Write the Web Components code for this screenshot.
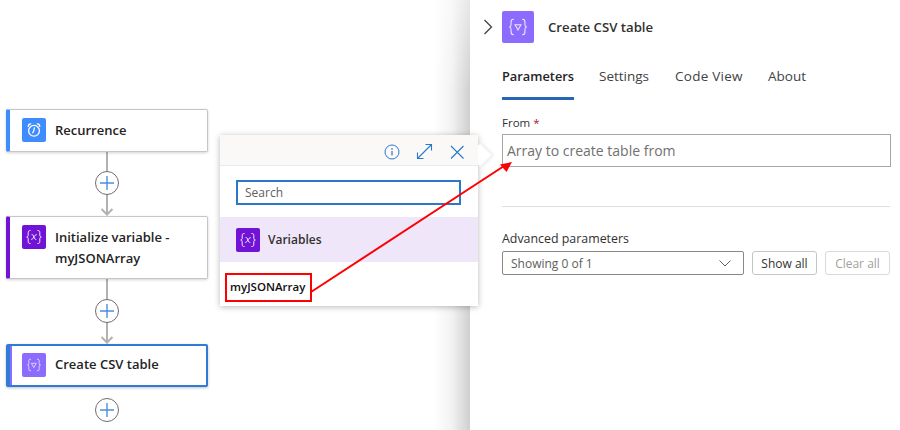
<!DOCTYPE html>
<html>
<head>
<meta charset="utf-8">
<title>Create CSV table</title>
<style>
  html, body { margin: 0; padding: 0; }
  body {
    width: 900px;
    height: 430px;
    overflow: hidden;
    position: relative;
    background: #fff;
    font-family: "Open Sans", "Noto Sans", sans-serif;
    color: #242424;
  }
</style>
</head>
<body>
<script>
const ICONS = {
  clock: `<svg viewBox="0 0 24 24" width="24" height="24" fill="none" stroke="#fff" stroke-width="1.3" stroke-linecap="round">
    <circle cx="12" cy="12.8" r="5.4"/><path d="M12.400 9.800 11.700 13l-1 1.800"/>
    <path d="M6.300 8.400c0-1.500 1-2.600 2.500-2.600M17.700 8.400c0-1.500-1-2.600-2.500-2.600"/></svg>`,
  variable: `<svg viewBox="0 0 24 24" width="24" height="24" fill="none" stroke="#fff" stroke-opacity=".9" stroke-width="1" stroke-linecap="round">
    <path d="M8.200 5.500c-1.800 0-2 .8-2 2.200v2.400c0 1.200-.5 1.700-1.500 1.900 1 .2 1.500.7 1.500 1.900v2.400c0 1.400.2 2.200 2 2.200"/>
    <path d="M15.800 5.500c1.800 0 2 .8 2 2.200v2.400c0 1.200.5 1.700 1.500 1.900-1 .2-1.500.7-1.500 1.900v2.400c0 1.400-.2 2.200-2 2.200"/>
    <path d="M10 9.600c1 0 1.400.5 1.900 2.400.5 1.900.9 2.400 2 2.400M14.300 9.700c-1 .1-1.700 1.100-2.400 2.300-.7 1.200-1.300 2.300-2.300 2.400"/>
  </svg>`,
  filter: `<svg viewBox="0 0 24 24" width="24" height="24" fill="none" stroke="#fff" stroke-opacity=".85" stroke-width=".8" stroke-linecap="round">
    <path d="M8.600 6.200c-1.600 0-1.800.7-1.800 2v2.200c0 1-.4 1.400-1.300 1.600.9.200 1.300.6 1.300 1.600v2.200c0 1.300.2 2 1.800 2"/>
    <path d="M15.400 6.200c1.600 0 1.800.7 1.800 2v2.200c0 1 .4 1.400 1.300 1.600-.9.200-1.300.6-1.300 1.600v2.200c0 1.300-.2 2-1.800 2"/>
    <path d="M9.800 10.300h4.400L12 14.200z"/></svg>`
};

class ActionIcon extends HTMLElement {
  constructor() {
    super();
    this.attachShadow({mode: 'open'});
  }
  connectedCallback() {
    const size = this.getAttribute('size') || 24;
    this.shadowRoot.innerHTML = `
      <style>
        :host {
          display: block;
          flex: none;
          width: ${size}px;
          height: ${size}px;
          border-radius: 2px;
          background: ${this.getAttribute('color')};
        }
        svg { display: block; width: 100%; height: 100%; }
      </style>
      ${ICONS[this.getAttribute('name')]}
    `;
  }
}
customElements.define('action-icon', ActionIcon);

// nodes sit on a free canvas, so their place comes from the attributes
class FlowNode extends HTMLElement {
  constructor() {
    super();
    this.attachShadow({mode: 'open'});
  }
  connectedCallback() {
    this.shadowRoot.innerHTML = `
      <style>
        :host {
          position: absolute;
          box-sizing: border-box;
          left: 6px;
          width: 202px;
          top: ${this.getAttribute('top')}px;
          height: ${this.getAttribute('height')}px;
          display: flex;
          align-items: flex-start;
          gap: 9px;
          padding: 8px 12px 0 12px;
          background: #fff;
          border: 1px solid #c8c6c4;
          border-left: 4px solid ${this.getAttribute('accent')};
          border-radius: 2px;
          box-shadow: 0 1px 3px rgba(0,0,0,.18);
          font-size: 13px;
          font-weight: 600;
          line-height: 21px;
          color: #242424;
          z-index: 2;
        }
        :host([selected]) {
          border: 2px solid #2f7bd6;
          border-left: 4px solid #2f7bd6;
          padding: 7px 12px 0 12px;
          box-shadow: 0 1px 3px rgba(0,0,0,.25), inset 2px 0 0 ${this.getAttribute('accent')};
        }
        .name { padding-top: ${this.getAttribute('text-top') || 2}px; }
      </style>
      <action-icon name="${this.getAttribute('icon')}" color="${this.getAttribute('accent')}"></action-icon>
      <div class="name"><slot></slot></div>
    `;
  }
}
customElements.define('flow-node', FlowNode);

class FlowPlus extends HTMLElement {
  constructor() {
    super();
    this.attachShadow({mode: 'open'});
  }
  connectedCallback() {
    const y = +this.getAttribute('y');
    const to = this.getAttribute('to');
    const from = this.getAttribute('from');
    const w = 30;
    const h = to ? to - from : 26;
    this.shadowRoot.innerHTML = `
      <style>
        :host {
          position: absolute;
          left: 92px;
          top: ${from}px;
          width: ${w}px;
          height: ${h}px;
          z-index: 1;
        }
        svg { display: block; }
      </style>
      <svg width="${w}" height="${h}" fill="none">
        ${to ? `<path d="M15 0V${h - 1}" stroke="#b3b1b0" stroke-width="2"/>
        <path d="M9.500 ${h - 7}l5.500 5.500 5.500-5.500" stroke="#b3b1b0" stroke-width="2"/>` : ''}
        <circle cx="15" cy="${y - from}" r="11.500" fill="#fff" stroke="#706e6c"/>
        <path d="M15 ${y - from - 7}v14M8 ${y - from}h14" stroke="#4a8fdc" stroke-width="1.400"/>
      </svg>
    `;
  }
}
customElements.define('flow-plus', FlowPlus);

class TokenPicker extends HTMLElement {
  constructor() {
    super();
    this.attachShadow({mode: 'open'});
    this.shadowRoot.innerHTML = `
      <style>
        :host {
          position: absolute;
          left: 220px;
          top: 135px;
          width: 258px;
          height: 171px;
          display: flex;
          flex-direction: column;
          background: #fff;
          box-shadow: 0 1px 6px rgba(0,0,0,.28);
          z-index: 4;
          font-size: 12px;
        }
        .beak {
          position: absolute;
          right: -10px;
          top: 12px;
          width: 16px;
          height: 16px;
          background: #fff;
          transform: rotate(45deg);
          box-shadow: 2px -2px 4px rgba(0,0,0,.08);
          z-index: -1;
        }
        header {
          height: 31px;
          box-sizing: border-box;
          background: #faf9f8;
          border-bottom: 1px solid #edebe9;
          display: flex;
          justify-content: flex-end;
          align-items: center;
          gap: 16px;
          padding: 3px 13px 0 0;
        }
        header svg { display: block; }
        .search { padding: 14px 17px 12px 16px; }
        .box {
          box-sizing: border-box;
          height: 25px;
          border: 2px solid #2b78c8;
          padding-left: 7px;
          line-height: 21px;
          color: #605e5c;
        }
        .group {
          height: 45px;
          background: #efe6f9;
          display: flex;
          align-items: center;
          gap: 8px;
          padding-left: 16px;
          font-weight: 600;
          color: #323130;
        }
        .item {
          padding: 13px 0 0 10px;
          font-size: 11.500px;
          font-weight: 600;
          color: #111;
          line-height: 24px;
        }
      </style>
      <div class="beak"></div>
      <header>
        <svg width="16" height="16" viewBox="0 0 16 16" fill="none" stroke="#2a78c9" stroke-width="1">
          <circle cx="8" cy="8" r="7"/><path d="M8 7v4.400" stroke-width="1.200"/><circle cx="8" cy="4.900" r=".8" fill="#2a78c9" stroke="none"/>
        </svg>
        <svg width="17" height="17" viewBox="0 0 17 17" fill="none" stroke="#2a78c9" stroke-width="1.100">
          <path d="M1.500 15.500 15.500 1.500M9.500 1.500h6v6M1.500 9.500v6h6"/>
        </svg>
        <svg width="16" height="16" viewBox="0 0 16 16" fill="none" stroke="#2a78c9" stroke-width="1.100">
          <path d="M2 2l12.500 12.500M14.500 2 2 14.500"/>
        </svg>
      </header>
      <div class="search"><div class="box">Search</div></div>
      <div class="group"><action-icon name="variable" color="#7113d6"></action-icon><slot name="group"></slot></div>
      <div class="item"><slot></slot></div>
    `;
  }
}
customElements.define('token-picker', TokenPicker);

class PanelTabs extends HTMLElement {
  constructor() {
    super();
    this.attachShadow({mode: 'open'});
    this.shadowRoot.innerHTML = `
      <style>
        :host { display: flex; gap: 25px; font-size: 13.500px; color: #424242; }
        ::slotted(span) { display: block; height: 35px; line-height: 23px; box-sizing: border-box; white-space: nowrap; }
        ::slotted(span.on) { width: 72px; font-size: 12.800px; font-weight: 600; color: #242424; border-bottom: 3px solid #2766b5; }
        ::slotted(span.wide) { width: 67px; margin: 0 1px; letter-spacing: .25px; }
      </style>
      <slot></slot>
    `;
  }
}
customElements.define('panel-tabs', PanelTabs);

class DetailPanel extends HTMLElement {
  constructor() {
    super();
    this.attachShadow({mode: 'open'});
    this.shadowRoot.innerHTML = `
      <style>
        :host {
          position: absolute;
          left: 470px;
          top: 0;
          width: 430px;
          height: 430px;
          box-sizing: border-box;
          background: #fff;
          padding: 10px 9px 0 32px;
          display: flex;
          flex-direction: column;
          z-index: 3;
          color: #323130;
        }
        /* panel shadow, fades out toward the top of the window */
        :host::before {
          content: "";
          position: absolute;
          right: 100%;
          top: 0;
          bottom: 0;
          width: 36px;
          background: linear-gradient(to right, rgba(0,0,0,0), rgba(0,0,0,.05) 50%, rgba(0,0,0,.19));
          -webkit-mask-image: linear-gradient(to bottom, rgba(0,0,0,.5), #000 90px);
          mask-image: linear-gradient(to bottom, rgba(0,0,0,.5), #000 90px);
        }
        .head {
          display: flex;
          align-items: center;
          gap: 14px;
          height: 33px;
          margin-left: -19px;
          font-size: 13.200px;
          font-weight: 600;
        }
        .head svg { display: block; margin-right: -5px; }
        panel-tabs { margin-top: 22px; }
        .label { font-size: 12px; line-height: 16px; color: #323130; }
        .from { margin-top: 15px; font-size: 11.500px; }
        .from b { color: #a4262c; font-weight: 400; }
        .input {
          box-sizing: border-box;
          margin-top: 3px;
          height: 33px;
          border: 1px solid #a6a6a6;
          padding-left: 4px;
          line-height: 31px;
          font-size: 14px;
          color: #707070;
        }
        hr { margin: 39px 1px 0 0; border: 0; border-top: 1px solid #e1dfdd; }
        .adv { margin-top: 24px; font-size: 12.400px; }
        .row { display: flex; gap: 8px; margin-top: 4px; font-size: 12px; }
        .select {
          box-sizing: border-box;
          width: 242px;
          height: 24px;
          border: 1px solid #8a8886;
          border-radius: 2px;
          padding: 0 12px 0 8px;
          display: flex;
          justify-content: space-between;
          align-items: center;
          color: #605e5c;
        }
        .btn {
          box-sizing: border-box;
          width: 65px;
          height: 24px;
          border: 1px solid #c8c6c4;
          border-radius: 3px;
          text-align: center;
          line-height: 24px;
          color: #323130;
        }
        .btn.off { color: #a19f9d; border-color: #dcdad8; }
      </style>
      <div class="head">
        <svg width="10" height="16" viewBox="0 0 10 16" fill="none" stroke="#424242" stroke-width="1.300"><path d="M1.500 1l7 7-7 7"/></svg>
        <action-icon name="filter" color="#8c6cff" size="32"></action-icon>
        <slot name="title"></slot>
      </div>
      <panel-tabs>
        <span class="on">Parameters</span><span>Settings</span><span class="wide">Code View</span><span>About</span>
      </panel-tabs>
      <div class="label from">From <b>*</b></div>
      <div class="input">Array to create table from</div>
      <hr>
      <div class="label adv">Advanced parameters</div>
      <div class="row">
        <div class="select"><span>Showing 0 of 1</span>
          <svg width="12" height="7" viewBox="0 0 12 7" fill="none" stroke="#605e5c"><path d="M.5.5 6 6l5.500-5.500"/></svg>
        </div>
        <div class="btn">Show all</div>
        <div class="btn off">Clear all</div>
      </div>
    `;
  }
}
customElements.define('detail-panel', DetailPanel);

class CalloutArrow extends HTMLElement {
  constructor() {
    super();
    this.attachShadow({mode: 'open'});
    this.shadowRoot.innerHTML = `
      <style>
        :host { position: absolute; left: 0; top: 0; width: 900px; height: 430px; z-index: 5; pointer-events: none; }
        svg { display: block; }
      </style>
      <svg width="900" height="430" fill="none">
        <rect x="226" y="274" width="85" height="27" stroke="#f00" stroke-width="2"/>
        <path d="M311 292 504 166" stroke="#f00" stroke-width="2"/>
        <path d="M512 162 500 164.500 506.500 172z" fill="#f00"/>
      </svg>
    `;
  }
}
customElements.define('callout-arrow', CalloutArrow);
</script>

<flow-node top="109" height="43" accent="#3f8cff" icon="clock">Recurrence</flow-node>
<flow-plus from="152" to="216" y="183"></flow-plus>
<flow-node top="216" height="63" accent="#7113d6" icon="variable" text-top="2">Initialize variable -<br>myJSONArray</flow-node>
<flow-plus from="279" to="344" y="311"></flow-plus>
<flow-node top="344" height="43" accent="#8c6cff" icon="filter" text-top="1" selected>Create CSV table</flow-node>
<flow-plus from="398" y="410"></flow-plus>

<token-picker>
  <span slot="group">Variables</span>
  myJSONArray
</token-picker>

<detail-panel>
  <span slot="title">Create CSV table</span>
</detail-panel>

<callout-arrow></callout-arrow>
</body>
</html>
